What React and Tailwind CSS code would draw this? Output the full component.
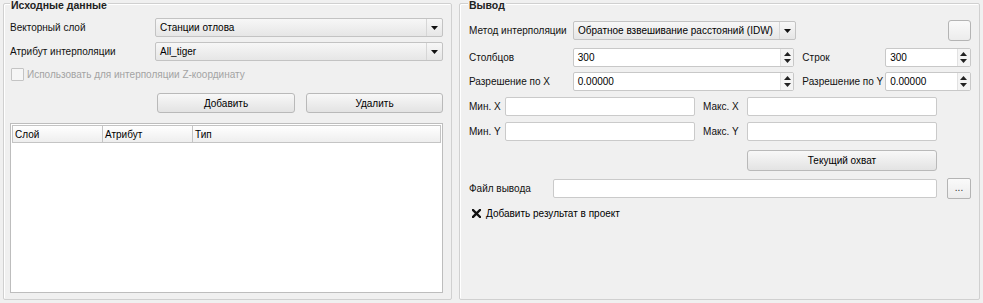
import React from "react";

const font = { fontFamily: '"Liberation Sans", Arial, sans-serif' };

function Combo({ w, text }) {
  return (
    <div className={`h-[19px] ${w} flex border border-[#c3c3c3] rounded-[2px] bg-gradient-to-b from-[#f7f7f7] to-[#e6e6e6]`}>
      <div className="flex-1 flex items-center pl-[4px] text-[10px] text-black whitespace-nowrap overflow-hidden">{text}</div>
      <div className="w-[16px] flex items-center justify-center border-l border-[#d6d6d6]">
        <svg width="7" height="4" viewBox="0 0 7 4"><path d="M0 0h7L3.5 4z" fill="#111" /></svg>
      </div>
    </div>
  );
}

function Spin({ w, text }) {
  return (
    <div className={`h-[19px] ${w} flex border border-[#c8c8c8] rounded-[2px] bg-white`}>
      <div className="flex-1 flex items-center pl-[4px] text-[10px] text-black">{text}</div>
      <div className="w-[13px] flex flex-col items-center justify-center gap-[3px] bg-[#f4f4f4] border-l border-[#e2e2e2]">
        <svg width="7" height="4" viewBox="0 0 7 4"><path d="M0 4h7L3.5 0z" fill="#222" /></svg>
        <svg width="7" height="4" viewBox="0 0 7 4"><path d="M0 0h7L3.5 4z" fill="#222" /></svg>
      </div>
    </div>
  );
}

function Input({ w }) {
  return <div className={`h-[19px] ${w} border border-[#cacaca] rounded-[2px] bg-white`} />;
}

function Btn({ w, h = "h-[20px]", children }) {
  return (
    <div className={`${w} ${h} flex items-center justify-center border border-[#b9b9b9] rounded-[3px] bg-gradient-to-b from-[#f8f8f8] to-[#e3e3e3] text-[10px] text-black`}>
      {children}
    </div>
  );
}

function Label({ w, children, cls = "" }) {
  return <div className={`${w} text-[10px] text-[#111] whitespace-nowrap ${cls}`}>{children}</div>;
}

export default function App() {
  return (
    <div style={font} className="w-[983px] h-[303px] bg-[#f0f0f0] flex pt-[3px] pl-[3px] gap-[7px] overflow-hidden">
      {/* Left group */}
      <div className="relative w-[449px] h-[297px] border border-[#d0d0d0] rounded-[2px] shadow-[inset_1px_1px_0_#fff] pl-[6px]">
        <div className="absolute left-[6px] top-[-4px] px-[1px] bg-[#f0f0f0] text-[10.5px] leading-[10px] font-bold text-[#222]">Исходные данные</div>
        <div className="flex items-center mt-[14px]">
          <Label w="w-[145px]">Векторный слой</Label>
          <Combo w="w-[288px]" text="Станции отлова" />
        </div>
        <div className="flex items-center mt-[5px]">
          <Label w="w-[145px]">Атрибут интерполяции</Label>
          <Combo w="w-[288px]" text="All_tiger" />
        </div>
        <div className="flex items-center mt-[7px] h-[13px]">
          <div className="ml-[1px] w-[13px] h-[13px] border border-[#c4c4c4] rounded-[1px] bg-[#f6f6f6]" />
          <span className="ml-[3px] text-[10px] text-[#a3a3a3] whitespace-nowrap">Использовать для интерполяции Z-координату</span>
        </div>
        <div className="flex mt-[12px] ml-[147px] gap-[11px]">
          <Btn w="w-[138px]">Добавить</Btn>
          <Btn w="w-[137px]">Удалить</Btn>
        </div>
        <div className="mt-[10px] w-[433px] h-[170px] border border-[#bdbdbd] bg-white p-[1px]">
          <div className="flex h-[18px] text-[10px] text-black">
            <div className="w-[91px] flex items-center pl-[2px] border border-[#c4c4c4] bg-gradient-to-b from-white to-[#eeeeee]">Слой</div>
            <div className="w-[90px] flex items-center pl-[2px] border-y border-r border-[#c4c4c4] bg-gradient-to-b from-white to-[#eeeeee]">Атрибут</div>
            <div className="flex-1 flex items-center pl-[2px] border-y border-r border-[#c4c4c4] bg-gradient-to-b from-white to-[#eeeeee]">Тип</div>
          </div>
        </div>
      </div>

      {/* Right group */}
      <div className="relative w-[521px] h-[297px] border border-[#d0d0d0] rounded-[2px] shadow-[inset_1px_1px_0_#fff] pl-[9px] pr-[8px]">
        <div className="absolute left-[8px] top-[-4px] px-[1px] bg-[#f0f0f0] text-[10.5px] leading-[10px] font-bold text-[#222]">Вывод</div>
        <div className="flex items-center mt-[16px]">
          <Label w="w-[104px]">Метод интерполяции</Label>
          <Combo w="w-[223px]" text="Обратное взвешивание расстояний (IDW)" />
          <div className="ml-auto w-[23px] h-[21px] border border-[#b4b4b4] rounded-[3px] bg-gradient-to-b from-[#fafafa] to-[#ececec]" />
        </div>
        <div className="flex items-center mt-[7px]">
          <Label w="w-[104px]">Столбцов</Label>
          <Spin w="w-[222px]" text="300" />
          <Label w="w-[83px]" cls="ml-[8px]">Строк</Label>
          <Spin w="w-[86px]" text="300" />
        </div>
        <div className="flex items-center mt-[5px]">
          <Label w="w-[104px]">Разрешение по X</Label>
          <Spin w="w-[222px]" text="0.00000" />
          <Label w="w-[83px]" cls="ml-[8px]">Разрешение по Y</Label>
          <Spin w="w-[86px]" text="0.00000" />
        </div>
        <div className="flex items-center mt-[6px]">
          <Label w="w-[36px]">Мин. X</Label>
          <Input w="w-[190px]" />
          <Label w="w-[44px]" cls="ml-[8px]">Макс. X</Label>
          <Input w="w-[190px]" />
        </div>
        <div className="flex items-center mt-[6px]">
          <Label w="w-[36px]">Мин. Y</Label>
          <Input w="w-[190px]" />
          <Label w="w-[44px]" cls="ml-[8px]">Макс. Y</Label>
          <Input w="w-[190px]" />
        </div>
        <div className="flex mt-[9px] ml-[278px]">
          <Btn w="w-[190px]" h="h-[21px]">Текущий охват</Btn>
        </div>
        <div className="flex items-center mt-[7px]">
          <Label w="w-[84px]">Файл вывода</Label>
          <Input w="w-[384px]" />
          <div className="ml-[10px] w-[24px] h-[21px] flex items-center justify-center border border-[#b4b4b4] rounded-[2px] bg-gradient-to-b from-[#fafafa] to-[#ececec] text-[10px] text-[#333] pb-[2px]">...</div>
        </div>
        <div className="flex items-center mt-[8px] h-[13px]">
          <div className="ml-[1px] w-[13px] h-[13px] flex items-center justify-center">
            <svg width="9" height="9" viewBox="0 0 9 9"><path d="M1 1L8 8M8 1L1 8" stroke="#111" strokeWidth="2.4" strokeLinecap="square" /></svg>
          </div>
          <span className="ml-[3px] text-[10px] text-black whitespace-nowrap">Добавить результат в проект</span>
        </div>
      </div>
    </div>
  );
}
